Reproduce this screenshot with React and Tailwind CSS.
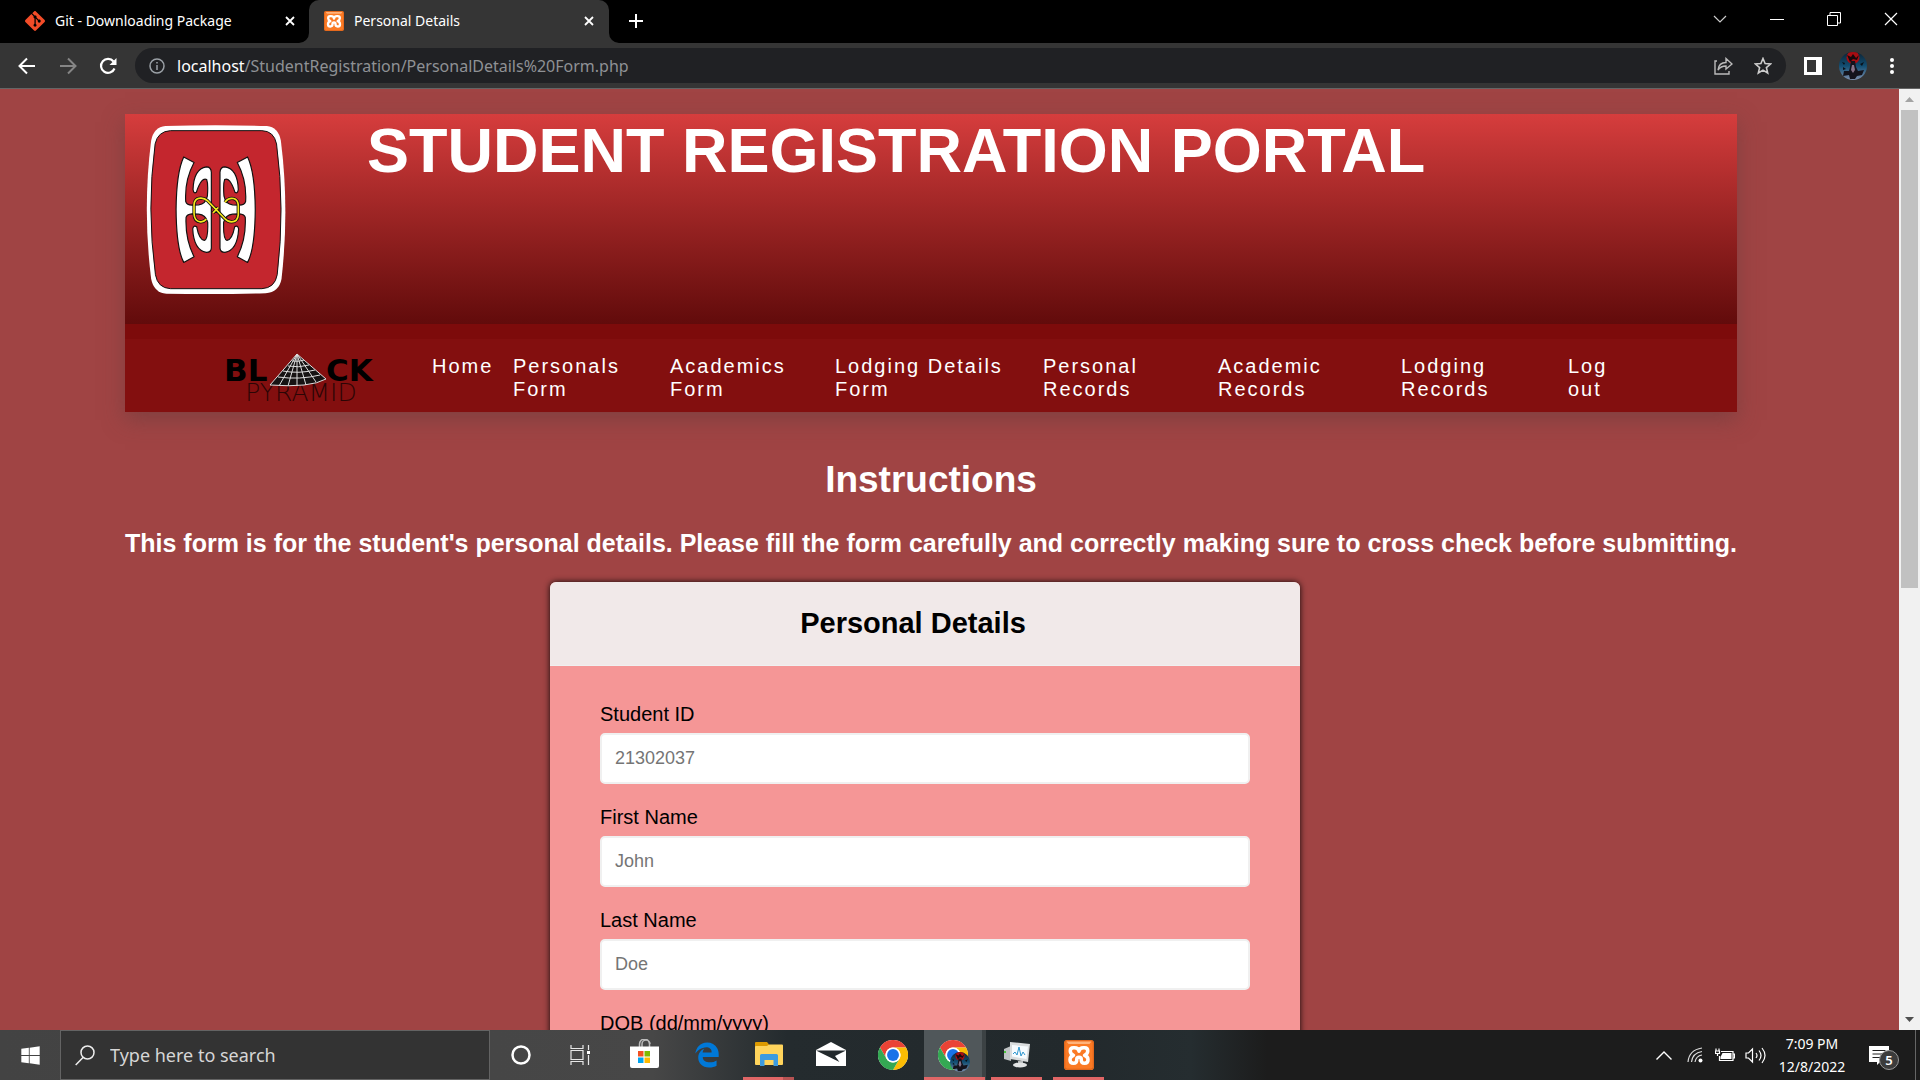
import { FaWindows } from "react-icons/fa";
import { FaEdgeLegacy } from "react-icons/fa6";
import { SiGit } from "react-icons/si";

const UI = "font-['Noto_Sans',sans-serif]";

function XamppIcon({ className }) {
  return (
    <svg viewBox="0 0 24 24" className={className} aria-hidden="true">
      <rect width="24" height="24" rx="2.5" fill="#fb7a24" />
      <rect x="0.6" y="0.6" width="22.8" height="22.8" rx="2" fill="none" stroke="#d9611a" strokeWidth="0.8" />
      <path d="M2 1.2h20l-1.6 2H3.6z" fill="#ffb27a" />
      <path
        d="M12 9Q11.500 6.200 8.500 6.200H7.500Q5 6.200 5 8.800Q5 11 7.600 12.200Q4.800 13.200 4.800 15.800Q4.800 18.600 7.600 18.600Q10.200 18.600 10.200 16V15.400Q10.200 13.800 12 13.800Q13.800 13.800 13.800 15.400V16Q13.800 18.600 16.400 18.600Q19.200 18.600 19.200 15.800Q19.200 13.200 16.400 12.200Q19 11 19 8.800Q19 6.200 16.500 6.200H15.500Q12.500 6.200 12 9Z"
        fill="none"
        stroke="#fff"
        strokeWidth="2.800"
        strokeLinejoin="round"
      />
    </svg>
  );
}

function ChromeIcon({ className }) {
  return (
    <svg viewBox="0 0 48 48" className={className} aria-hidden="true">
      <circle cx="24" cy="24" r="24" fill="#fff" />
      <path d="M3.200 12a24 24 0 0 1 41.600 0H24a12 12 0 0 0-10.400 18z" fill="#ea4335" />
      <path d="M44.800 12A24 24 0 0 1 24 48l10.400-18A12 12 0 0 0 24 12z" fill="#fbbc04" />
      <path d="M24 48A24 24 0 0 1 3.200 12l10.400 18a12 12 0 0 0 20.800 0z" fill="#34a853" />
      <circle cx="24" cy="24" r="12" fill="#fff" />
      <circle cx="24" cy="24" r="9.500" fill="#1a73e8" />
    </svg>
  );
}

function Avatar({ className }) {
  return (
    <svg viewBox="0 0 28 28" className={className} aria-hidden="true">
      <defs>
        <linearGradient id="avatarSky" x1="0" y1="0" x2="0" y2="1">
          <stop offset="0" stopColor="#0c2334" />
          <stop offset="0.5" stopColor="#124e72" />
          <stop offset="1" stopColor="#7d8fae" />
        </linearGradient>
        <clipPath id="avatarClip"><circle cx="14" cy="14" r="14" /></clipPath>
      </defs>
      <g clipPath="url(#avatarClip)">
        <rect width="28" height="28" fill="url(#avatarSky)" />
        <circle cx="14" cy="5.500" r="6.500" fill="#a80d12" />
        <path d="M8 3l4 2 2-3 3 4 3-3-2 5-4-1-3 3z" fill="#18090c" />
        <path d="M12 9h4l1 6 2 4 6-1-2 5-5 1-2 3h-5l-1-4-6 1 1-5 5 0 1-4z" fill="#14131c" />
        <path d="M3 10l3 1-1 2zM21 12l4-2-2 4zM4 15l3 2-3 1z" fill="#081018" />
        <path d="M13 13h2l1 5-2 3-2-3z" fill="#877389" />
      </g>
    </svg>
  );
}

function CloseIcon() {
  return (
    <svg viewBox="0 0 10 10" className="size-[10px]" stroke="#fff" strokeWidth="1.800" aria-hidden="true">
      <path d="M1 1l8 8M9 1L1 9" />
    </svg>
  );
}

function TabBar() {
  return (
    <div className="flex h-[43px] shrink-0 items-stretch bg-black text-sm text-white">
      <div className="flex w-[309px] items-center pb-[2px] pl-[25px] pr-[14px]">
        <SiGit className="size-5 text-[#f34c28]" />
        <span className="ml-[10px] flex-1 whitespace-nowrap">Git - Downloading Package</span>
        <button aria-label="Close tab"><CloseIcon /></button>
      </div>
      <div className="relative flex w-[300px] items-center rounded-t-[10px] bg-[#353535] pb-[2px] pl-[15px] pr-[15px]">
        <svg viewBox="0 0 10 10" className="absolute bottom-0 -left-[10px] size-[10px]"><path d="M10 0v10H0A10 10 0 0 0 10 0z" fill="#353535" /></svg>
        <svg viewBox="0 0 10 10" className="absolute bottom-0 -right-[10px] size-[10px]"><path d="M0 0v10h10A10 10 0 0 1 0 0z" fill="#353535" /></svg>
        <XamppIcon className="size-5" />
        <span className="ml-[10px] flex-1 whitespace-nowrap">Personal Details</span>
        <button aria-label="Close tab"><CloseIcon /></button>
      </div>
      <button aria-label="New tab" className="ml-[19px] self-center pb-[2px]">
        <svg viewBox="0 0 16 16" className="size-4" stroke="#fff" strokeWidth="2"><path d="M8 1v14M1 8h14" /></svg>
      </button>
      <div className="ml-auto flex items-center pb-[6px]">
        <button aria-label="Search tabs" className="grid w-[57px] place-items-center">
          <svg viewBox="0 0 14 8" className="h-2 w-[14px]" fill="none" stroke="#ccc" strokeWidth="1.200"><path d="M1 1l6 6 6-6" /></svg>
        </button>
        <button aria-label="Minimize" className="grid w-[57px] place-items-center">
          <svg viewBox="0 0 14 14" className="size-[14px]" stroke="#fff"><path d="M0 7.500h14" /></svg>
        </button>
        <button aria-label="Restore" className="grid w-[57px] place-items-center">
          <svg viewBox="0 0 14 14" className="size-[14px]" fill="none" stroke="#fff"><path d="M.5 3.500h10v10H.5zM3 3V.5h10.500V11H11" /></svg>
        </button>
        <button aria-label="Close window" className="grid w-[58px] place-items-center">
          <svg viewBox="0 0 14 14" className="size-[14px]" stroke="#fff" strokeWidth="1.200"><path d="M1 1l12 12M13 1L1 13" /></svg>
        </button>
      </div>
    </div>
  );
}

function Toolbar() {
  return (
    <div className="flex h-[46px] shrink-0 items-center border-b border-[#656565] bg-[#353535] pl-[18px] pr-[25px]">
      <button aria-label="Back" className="w-[41px]">
        <svg viewBox="0 0 18 18" className="size-[18px]" fill="none" stroke="#fff" strokeWidth="2"><path d="M17 9H2M9 1.500L1.500 9 9 16.500" /></svg>
      </button>
      <button aria-label="Forward" className="w-10">
        <svg viewBox="0 0 18 18" className="size-[18px]" fill="none" stroke="#858585" strokeWidth="2"><path d="M1 9h15M9 1.500L16.500 9 9 16.500" /></svg>
      </button>
      <button aria-label="Reload" className="w-9">
        <svg viewBox="0 0 18 18" className="size-[18px]" fill="none" stroke="#fff" strokeWidth="2.200"><path d="M15.500 11.500A7 7 0 1 1 14.500 4.500" /><path d="M17.500 1v7h-7z" fill="#fff" stroke="none" /></svg>
      </button>
      <div className="flex h-[35px] flex-1 items-center rounded-full bg-[#202124] pl-[14px] pr-[14px]">
        <svg viewBox="0 0 16 16" className="size-4" fill="none" stroke="#9aa0a6" strokeWidth="1.500"><circle cx="8" cy="8" r="7" /><path d="M8 7v5M8 4v1.600" /></svg>
        <div className="ml-3 flex-1 text-base text-[#8f9195]"><span className="text-white">localhost</span>/StudentRegistration/PersonalDetails%20Form.php</div>
        <button aria-label="Share" className="mr-[21px]">
          <svg viewBox="0 0 19 18" className="h-[18px] w-[19px]" fill="none" stroke="#bbb" strokeWidth="1.400"><path d="M3 4H1v13h14v-3" /><path d="M4 13c.5-5 3.500-7.500 8-7.500V1.500L18 7l-6 5V9c-3.500 0-6 1-8 4z" /></svg>
        </button>
        <button aria-label="Bookmark">
          <svg viewBox="0 0 18 18" className="size-[18px]" fill="none" stroke="#ccc" strokeWidth="1.600"><path d="M9 1.500l2.100 5.100 5.500.4-4.200 3.600 1.300 5.400L9 13.100 4.300 16l1.300-5.400L1.400 7l5.500-.4z" /></svg>
        </button>
      </div>
      <button aria-label="Side panel" className="ml-[18px]">
        <svg viewBox="0 0 18 18" className="size-[18px]"><path d="M0 0h18v18H0zM3 3v12h9V3z" fill="#fff" fillRule="evenodd" /></svg>
      </button>
      <button aria-label="Profile" className="ml-[17px]"><Avatar className="size-7" /></button>
      <button aria-label="Menu" className="ml-[22px]">
        <svg viewBox="0 0 6 18" className="h-[18px] w-[6px]" fill="#fff"><circle cx="3" cy="3" r="2" /><circle cx="3" cy="9" r="2" /><circle cx="3" cy="15" r="2" /></svg>
      </button>
    </div>
  );
}

const HALF =
  "M190 154L221 171Q192 225 196 288Q199 299 215 299L235 298Q256 296 261 272Q264 235 259 222Q244 213 228 260Q220 266 218 252Q220 190 258 184Q272 184 273 200V428Q272 441 258 441Q220 434 217 370Q220 358 229 364Q236 402 252 405Q264 402 262 350Q256 328 235 326L215 325Q199 326 197 336Q194 400 221 454L190 471Q168 430 167 312Q168 200 190 154Z";
const CHAIN =
  "M314 290Q324 276 340 279Q352 282 354 298V328Q352 349 334 349Q322 349 313 339L262 286Q251 276 238 278Q222 280 221 298V325Q222 348 240 349Q250 350 258 341M278 322L294 306";

function Crest() {
  return (
    <svg viewBox="77 58 420 511" className="h-[170px] w-[140px]" role="img" aria-label="School crest">
      <path d="M135 61Q285 57 440 61Q474 64 482 105Q508 310 484 520Q477 560 436 564Q285 568 138 565Q100 562 92 520Q66 310 92 105Q100 64 135 61Z" fill="#fff" />
      <path d="M150 75H425Q461 76 469 115Q495 310 471 508Q464 548 425 550H150Q112 548 105 508Q78 310 104 115Q112 77 150 75Z" fill="#c4262e" stroke="#111" strokeWidth="3" />
      <g fill="#fff" stroke="#111" strokeWidth="3.500" strokeLinejoin="round">
        <path d={HALF} />
        <path d={HALF} transform="translate(572 0) scale(-1 1)" />
      </g>
      <path d={CHAIN} fill="none" stroke="#111" strokeWidth="10" />
      <path d={CHAIN} fill="none" stroke="#f3e81c" strokeWidth="5" />
    </svg>
  );
}

function BlackPyramid() {
  return (
    <svg viewBox="0 0 160 52" className="h-[52px] w-[160px] overflow-visible" role="img" aria-label="Black Pyramid">
      <g fill="#000" fontFamily="DejaVu Sans" fontWeight="700" fontSize="31">
        <text x="2" y="30">BL</text>
        <text x="104" y="30">CK</text>
      </g>
      <text x="79" y="50" textAnchor="middle" fill="#2b0505" fontFamily="DejaVu Sans" fontWeight="200" fontSize="25">PYRAMID</text>
      <path d="M75 3L104 28Q88 37 48 34Z" fill="#161313" />
      <g fill="none" stroke="#ddd" strokeWidth="1">
        <path d="M75 3L48 34M75 3L57 35M75 3L66 35M75 3L75 35M75 3L84 34M75 3L94 31M75 3L104 28" />
        <path d="M70 10Q77 11 82 9M66 15Q77 17 87 14M61 20Q77 23 93 19M56 26Q78 29 98 24M48 34Q88 37 104 28" />
      </g>
    </svg>
  );
}

const LINKS = ["Home", "Personals Form", "Academics Form", "Lodging Details Form", "Personal Records", "Academic Records", "Lodging Records", "Log out"];

function Banner() {
  return (
    <header className="shadow-[0_8px_20px_rgba(100,60,60,0.5)]">
      <div className="flex h-[210px] bg-linear-to-b from-[#d63d3d] to-[#620b0b] pl-[21px] pt-[11px]">
        <Crest />
        <h1 className="ml-[81px] whitespace-nowrap text-[63px] leading-[50px] font-bold text-white">STUDENT REGISTRATION PORTAL</h1>
      </div>
      <nav className="flex items-start border-t-[15px] border-[#7d0b0b] bg-[#830f0f] pl-[97px] pb-[9px]">
        <div className="mt-[12px] w-[210px] shrink-0"><BlackPyramid /></div>
        <ul className="mt-4 grid flex-1 grid-cols-[81fr_157fr_165fr_208fr_175fr_183fr_167fr_169fr] text-xl leading-[23px] tracking-[2px] text-white">
          {LINKS.map((name, i) => (
            <li key={name} className={i === 3 ? "pr-6" : i === 0 ? "" : i === 7 ? "pr-[100px]" : "pr-10"}>
              <a href="#">{name}</a>
            </li>
          ))}
        </ul>
      </nav>
    </header>
  );
}

const FIELDS = [
  ["studentId", "Student ID", "21302037"],
  ["firstName", "First Name", "John"],
  ["lastName", "Last Name", "Doe"],
  ["dob", "DOB (dd/mm/yyyy)", ""],
];

function DetailsForm() {
  return (
    <div className="pr-[12px]">
      <form className="mx-auto w-[750px] overflow-hidden rounded-md bg-[#f59696] shadow-[0_0_6px_rgba(0,0,0,0.9)]">
        <h2 className="border-b border-[#f0f0f0] bg-[#f1e9e9] pt-6 pr-6 pb-[25px] text-center text-[29px] leading-[34px] font-bold text-black">Personal Details</h2>
        <div className="flex flex-col gap-[22px] px-[50px] pt-[37px] pb-10">
          {FIELDS.map(([id, label, hint]) => (
            <div key={id} className="flex flex-col gap-[7px]">
              <label htmlFor={id} className="text-xl leading-[23px] text-black">{label}</label>
              <input id={id} placeholder={hint} className="h-[51px] w-full rounded-[5px] border-2 border-[#f0f0f0] bg-white px-[13px] text-[18px] text-black placeholder:text-[#757575]" />
            </div>
          ))}
        </div>
      </form>
    </div>
  );
}

function Page() {
  return (
    <div className="flex min-h-0 flex-1 font-['Liberation_Sans',Arial,sans-serif]">
      <main className="min-w-0 flex-1 overflow-hidden bg-[#a04444] pt-[25px] pr-[162px] pl-[125px]">
        <Banner />
        <h2 className="mt-[46px] text-center text-[37px] leading-[43px] font-bold text-white">Instructions</h2>
        <h3 className="mt-[28px] mb-6 flex justify-center whitespace-nowrap text-[25px] leading-[29px] font-bold text-white">
          This form is for the student's personal details. Please fill the form carefully and correctly making sure to cross check before submitting.
        </h3>
        <DetailsForm />
      </main>
      <div className="flex w-[21px] shrink-0 flex-col items-center bg-[#f1f1f1]">
        <div className="grid h-[21px] shrink-0 place-items-center"><svg viewBox="0 0 9 5" className="h-[5px] w-[9px]" fill="#a3a3a3"><path d="M0 5L4.500 0 9 5z" /></svg></div>
        <div className="h-[478px] w-[17px] bg-[#c1c1c1]" />
        <div className="mt-auto grid h-[21px] shrink-0 place-items-center"><svg viewBox="0 0 9 5" className="h-[5px] w-[9px]" fill="#505050"><path d="M0 0L4.500 5 9 0z" /></svg></div>
      </div>
    </div>
  );
}

function Slot({ label, className = "", bar, children }) {
  return (
    <button aria-label={label} className={`relative grid h-full w-[62px] shrink-0 place-items-center ${className}`}>
      {children}
      {bar && <span className={`absolute bottom-0 h-[3px] bg-[#e06666] ${bar}`} />}
    </button>
  );
}

function Taskbar() {
  return (
    <div className="flex h-[50px] shrink-0 items-center bg-[linear-gradient(90deg,#434343_0,#474747_34%,#242b2e_41%,#22292c_56%,#252d30_62%,#1c1c1c_66%)] text-white">
      <button aria-label="Start" className="grid h-full w-[60px] place-items-center"><FaWindows className="size-[21px]" /></button>
      <label className="flex h-full w-[430px] items-center border border-[#636363] bg-[#333] pl-[14px]">
        <svg viewBox="0 0 20 21" className="h-[21px] w-5" fill="none" stroke="#eee" strokeWidth="1.500"><circle cx="12.500" cy="7.500" r="6.500" /><path d="M8 12.500L.7 20" /></svg>
        <input aria-label="Search" placeholder="Type here to search" className="ml-[15px] flex-1 bg-transparent text-[18px] placeholder:text-[#d6d6d6]" />
      </label>
      <Slot label="Cortana"><svg viewBox="0 0 20 20" className="size-5" fill="none" stroke="#fff" strokeWidth="2.500"><circle cx="10" cy="10" r="8.500" /></svg></Slot>
      <Slot label="Task view"><svg viewBox="0 0 21 20" className="mr-[5px] h-5 w-[21px]" fill="none" stroke="#e8e8e8" strokeWidth="1.200"><path d="M1 0v3.500h12V0M1 5.500h12v9H1zM1 20v-3.500h12V20M18.500 0v5M18.500 10v10" /><path d="M17 6h3v3h-3z" fill="#fff" stroke="none" /></svg></Slot>
      <Slot label="Store"><svg viewBox="0 0 29 29" className="mr-[2px] mb-1 size-[29px]"><path d="M9.500 8V5a5 5 0 0 1 10 0v3M12 8V5a4 4 0 0 1 8 0" fill="none" stroke="#bbb" strokeWidth="1.500" /><path d="M0 7.500h29V27q0 2-2 2H2q-2 0-2-2z" fill="#fff" /><path d="M8 12h5.500v5.500H8z" fill="#f25022" /><path d="M14.500 12H20v5.500h-5.500z" fill="#7fba00" /><path d="M8 18.500h5.500V24H8z" fill="#00a4ef" /><path d="M14.500 18.500H20V24h-5.500z" fill="#ffb900" /></svg></Slot>
      <Slot label="Edge"><FaEdgeLegacy className="size-[26px] text-[#0078d7]" /></Slot>
      <Slot label="File Explorer" bar="left-[5px] w-[51px] border-r-[11px] border-[#b55353]"><svg viewBox="0 0 28 24" className="mb-[2px] h-6 w-7"><path d="M0 1q0-1 1-1h11l2 2.500V5H0z" fill="#dd9a00" /><path d="M1 4h11l2-1.500h13q1 0 1 1V22q0 1-1 1H1q-1 0-1-1V5q0-1 1-1z" fill="#ffd45c" /><path d="M5 24V13.500q0-1.500 1.500-1.500h15q1.500 0 1.500 1.500V24h-4.500v-6h-9v6z" fill="#3c9be0" /></svg></Slot>
      <Slot label="Mail"><svg viewBox="0 0 30 24" className="mb-[2px] h-6 w-[30px]"><path d="M0 8L15 0l15 8v16H0z" fill="#fff" /><path d="M0 8.500h30L19 14l4.500 6z" fill="#22292c" /></svg></Slot>
      <Slot label="Chrome"><ChromeIcon className="size-[30px]" /></Slot>
      <Slot label="Chrome window" className="border-r-4 border-[#3c4244] bg-[#50575a]" bar="left-0 w-[61px]">
        <span className="relative"><ChromeIcon className="size-[30px]" /><Avatar className="absolute top-3 left-3 size-5" /></span>
      </Slot>
      <Slot label="System monitor" bar="left-[5px] w-[51px]"><svg viewBox="0 0 28 26" className="h-[26px] w-7"><path d="M1 7l7-3v15l-7-2z" fill="#bfc3c4" /><path d="M1 9h2v2H1z" fill="#4bc53d" /><path d="M7 0l20 2-2 18-18-3z" fill="#d9dcdd" /><path d="M9 3l16 1.500L23.500 17 9 14.500z" fill="#f6fbfe" /><path d="M10 12l2-2 2 3 2-8 2 9 2-4 2 3" fill="none" stroke="#2d96cf" /><path d="M15 19h5v3h-5z" fill="#b6b9ba" /><ellipse cx="17" cy="23" rx="7" ry="2.500" fill="#e2e4e5" /></svg></Slot>
      <Slot label="XAMPP" bar="left-[5px] w-[51px]"><XamppIcon className="size-[30px]" /></Slot>
      <div className="ml-auto flex h-full items-center">
        <svg viewBox="0 0 16 9" className="h-[9px] w-4" fill="none" stroke="#fff" strokeWidth="1.400"><path d="M.5 8.500L8 1l7.500 7.500" /></svg>
        <svg viewBox="0 0 16 16" className="ml-[15px] size-4" fill="none" stroke="#ddd" strokeWidth="1.200"><path d="M1 15Q2 3 15 1M4.500 15Q5.500 6 15 4.500M8 15Q9 9 15 8" /><circle cx="13.500" cy="13.500" r="2" fill="#fff" stroke="none" /></svg>
        <svg viewBox="0 0 20 15" className="ml-3 h-[15px] w-5" fill="none" stroke="#fff" strokeWidth="1.200"><path d="M6 3.500h12v9H4.500V8M18 6h1.500v4H18" /><path d="M7.500 5h9v6h-11V9z" fill="#fff" stroke="none" /><path d="M1 .5V3M4 .5V3M.5 3h4v2.500h-4zM2.500 5.500V8" /></svg>
        <svg viewBox="0 0 21 17" className="ml-[10px] h-[17px] w-[21px]" fill="none" stroke="#fff" strokeWidth="1.200"><path d="M1 6h2.500L7.500 2v13l-4-4H1zM11 6q2 2.500 0 5M14 3.500q4 5 0 10M17 1q6 7.500 0 15" /></svg>
        <div className="ml-[11px] w-[70px] whitespace-nowrap text-center text-sm leading-[23px]">
          <div>7:09 PM</div>
          <div>12/8/2022</div>
        </div>
        <button aria-label="Notifications" className="relative ml-[22px] h-[30px] w-[30px]">
          <svg viewBox="0 0 20 19" className="h-[19px] w-5"><path d="M0 0h20v16H11l-3 3v-3H0z" fill="#fff" /><path d="M3.500 4.500h13M3.500 8h13M3.500 11.500h8" stroke="#222" strokeWidth="1.200" /></svg>
          <span className="absolute right-0 bottom-0 grid size-5 place-items-center rounded-full border border-[#999] bg-[#3c3c3c] text-[13px] leading-none font-semibold">5</span>
        </button>
        <div className="ml-4 h-full w-[5px] border-l border-[#666]" />
      </div>
    </div>
  );
}

export default function App() {
  return (
    <div className={`flex h-screen flex-col overflow-hidden ${UI}`}>
      <TabBar />
      <Toolbar />
      <Page />
      <Taskbar />
    </div>
  );
}
